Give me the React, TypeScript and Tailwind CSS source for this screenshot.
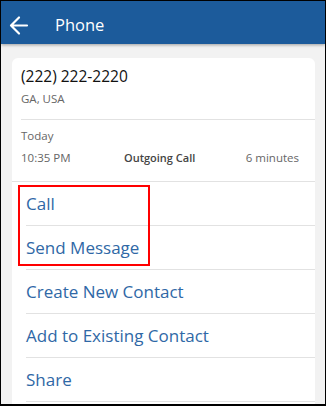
import React from "react";

const items = ["Call", "Send Message", "Create New Contact", "Add to Existing Contact", "Share"];

export default function App() {
  return (
    <div
      className="relative w-[326px] h-[406px] overflow-hidden border border-b-2 border-black bg-[#f2f2f2]"
      style={{ fontFamily: '"Open Sans", "Noto Sans", sans-serif' }}
    >
      <div className="relative z-10 flex h-[43px] items-center pt-[5px] bg-[#1c5b9b] shadow-[0_1px_3px_rgba(0,0,0,0.35)]">
        <svg width="54" height="38" viewBox="0 0 54 38" className="shrink-0">
          <path d="M10 19.5 H26 M18 11.5 L10 19.5 L18 27.5" fill="none" stroke="white" strokeWidth="2.2" strokeLinecap="round" strokeLinejoin="round" />
        </svg>
        <span className="text-[16.5px] font-medium text-white leading-none">Phone</span>
      </div>
      <div className="ml-[11px] mr-[10px] mt-[14px] rounded-t-[6px] bg-white">
        <div className="pl-[9px] pt-[8px]">
          <div className="text-[15.5px] leading-[20px] text-[#111]">(222) 222-2220</div>
          <div className="mt-[5px] text-[11.5px] leading-[16px] text-[#666]">GA, USA</div>
          <div className="mt-[12px] h-px bg-[#e2e2e2]" />
          <div className="mt-[8px] text-[11.5px] leading-[16px] text-[#666]">Today</div>
          <div className="mt-[6px] flex items-center pr-[16px] text-[11.5px] leading-[16px]">
            <span className="w-[103px] text-[#666]">10:35 PM</span>
            <span className="text-[11px] font-semibold text-[#444]">Outgoing Call</span>
            <span className="ml-auto text-[#666]">6 minutes</span>
          </div>
        </div>
        <div className="mt-[15px] h-px bg-[#e2e2e2]" />
        <div className="pl-[14px]">
          {items.map((t) => (
            <div key={t}>
              <div className="flex h-[43px] items-center text-[17px] text-[#2f68a6]">{t}</div>
              <div className="h-px bg-[#e2e2e2]" />
            </div>
          ))}
          <div className="h-[20px]" />
        </div>
      </div>
      <div className="absolute left-[17px] top-[184px] h-[81px] w-[132px] border-2 border-[#ff0000]" />
    </div>
  );
}
